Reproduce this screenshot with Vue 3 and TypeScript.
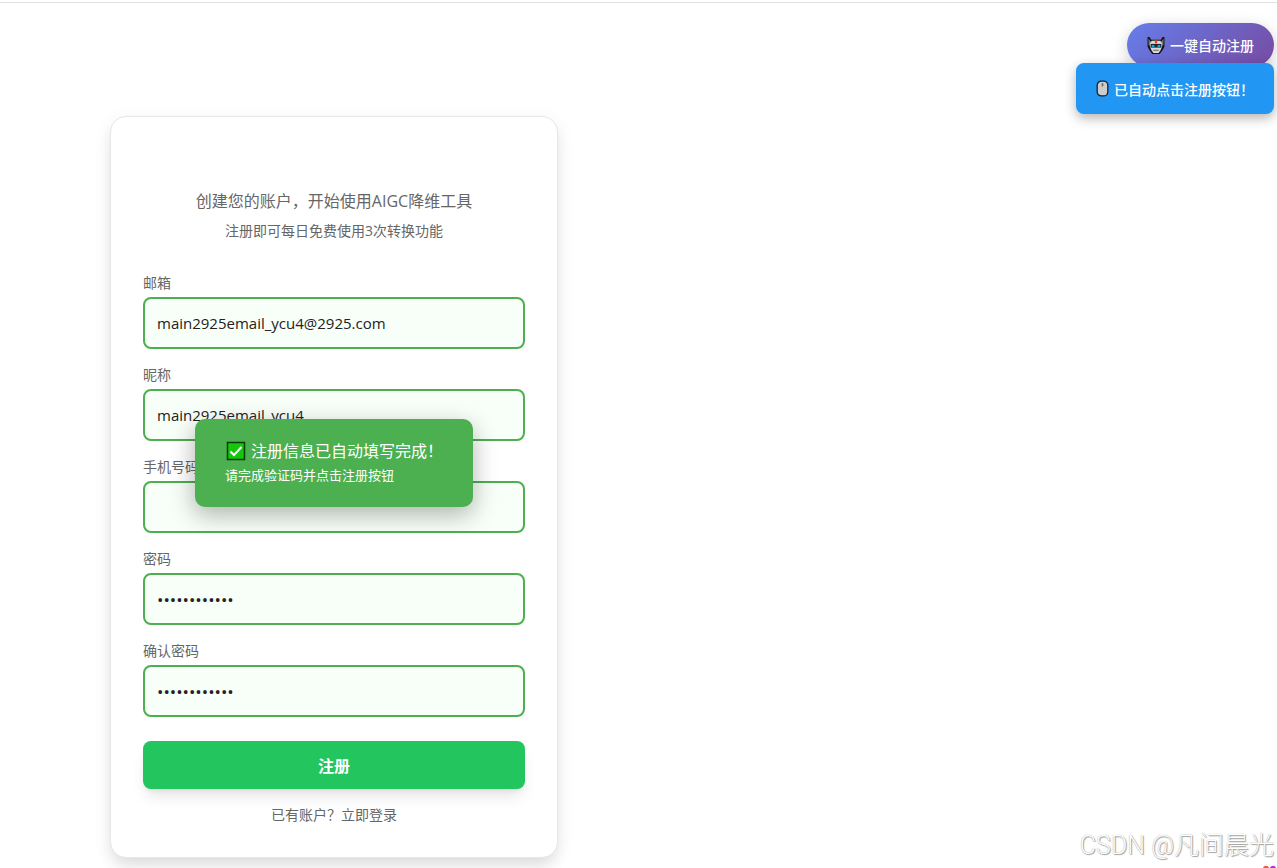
<script setup lang="ts">
import { reactive } from 'vue'

interface Field {
  id: string
  label: string
  type: string
  value: string
}

const fields = reactive<Field[]>([
  { id: 'email', label: '邮箱', type: 'email', value: 'main2925email_ycu4@2925.com' },
  { id: 'nickname', label: '昵称', type: 'text', value: 'main2925email_ycu4' },
  { id: 'phone', label: '手机号码', type: 'tel', value: '' },
  { id: 'password', label: '密码', type: 'password', value: 'abcdefgh1234' },
  { id: 'confirm', label: '确认密码', type: 'password', value: 'abcdefgh1234' },
])
</script>

<template>
  <div class="page">
    <header class="topbar"></header>
    <main class="content">
      <section class="card">
        <div class="intro">
          <p class="lead">创建您的账户，开始使用AIGC降维工具</p>
          <p class="note">注册即可每日免费使用3次转换功能</p>
        </div>
        <form @submit.prevent>
          <div v-for="f in fields" :key="f.id" class="field">
            <label :for="f.id">{{ f.label }}</label>
            <input :id="f.id" v-model="f.value" :type="f.type" autocomplete="off" />
          </div>
          <button class="submit" type="submit">注册</button>
        </form>
        <p class="login"><a href="#">已有账户？立即登录</a></p>

        <div class="done" role="status">
          <p class="done-title">
            <svg class="check" viewBox="0 0 20 20" aria-hidden="true">
              <rect x="1.500" y="1.500" width="17" height="17" fill="#16c60c" stroke="#0b3d0b" stroke-width="1.500" />
              <path d="M4.500 10.500 8 14l7.500-8" fill="none" stroke="#fff" stroke-width="2" />
            </svg>
            <span>注册信息已自动填写完成！</span>
          </p>
          <p class="done-note">请完成验证码并点击注册按钮</p>
        </div>
      </section>
    </main>

    <div class="floating">
      <button class="auto" type="button">
        <svg class="robot" viewBox="0 0 16 16" aria-hidden="true">
          <path d="M0 0h2l1.500 2.500h9L14 0h2v9l-1.500 3-3 4h-7l-3-4L0 9z" fill="#17171e" />
          <path d="M1 1.500l2 3V9L1 7.500zM15 1.500l-2 3V9l2-1.500z" fill="#77737c" />
          <path d="M4 3.500h8l1.500 2v4l-1 2.500-2 3h-5l-2-3-1-2.500v-4z" fill="#d9d9dc" />
          <path d="M7 3h2v3H7z" fill="#f03a17" />
          <path d="M3 6.500h10V10H3z" fill="#20242c" />
          <path d="M4 7.500h2.500v2H4zM9.500 7.500H12v2H9.500z" fill="#13a9d8" />
          <path d="M5.500 12h5v1h-5z" fill="#66666d" />
        </svg>
        <span>一键自动注册</span>
      </button>
      <div class="clicked" role="status">
        <svg class="mouse" viewBox="0 0 12 16" aria-hidden="true">
          <rect x="1" y="1" width="10" height="14" rx="4" fill="#ccc" stroke="#16202a" stroke-width="1.200" />
          <path d="M6 3v3" stroke="#666" stroke-width="1.500" />
        </svg>
        <span>已自动点击注册按钮！</span>
      </div>
    </div>

    <svg class="bubble" viewBox="0 0 24 12" aria-hidden="true">
      <path d="M0 12C4 4 12 0 24 0v12z" fill="#fff" />
      <path d="M10 12c1-3 5-3 6 0z" fill="#f0564a" />
      <path d="M17 12c1-3 5-3 6 0z" fill="#c12bdc" />
    </svg>
    <div class="watermark">CSDN @凡间晨光</div>
  </div>
</template>

<style>
body {
  margin: 0;
  background: #fff;
}
</style>

<style scoped>
.page {
  position: relative;
  box-sizing: border-box;
  min-height: 100vh;
  overflow: hidden;
  font-family: "Open Sans", "Noto Sans CJK SC", sans-serif;
  color: #666;
}
p {
  margin: 0;
}
.topbar {
  height: 2px;
  border-bottom: 1px solid #e0e0e0;
}
.content {
  padding: 113px 20px 10px 110px;
}
.card {
  position: relative;
  box-sizing: border-box;
  max-width: 448px;
  padding: 72px 32px 32px;
  border: 1px solid #e5e7eb;
  border-radius: 16px;
  background: #fff;
  box-shadow: 0 10px 15px -3px rgba(0, 0, 0, 0.1), 0 4px 20px rgba(0, 0, 0, 0.06);
}
.intro {
  display: flex;
  flex-direction: column;
  gap: 8px;
  margin-bottom: 32px;
  text-align: center;
}
.lead {
  font-size: 16px;
  line-height: 24px;
}
.note {
  font-size: 14px;
  line-height: 20px;
}
form {
  display: flex;
  flex-direction: column;
  gap: 16px;
}
.field {
  display: flex;
  flex-direction: column;
  gap: 4px;
}
label {
  font-size: 14px;
  line-height: 20px;
}
input {
  box-sizing: border-box;
  width: 100%;
  height: 52px;
  padding: 0 12px;
  border: 2px solid #4caf50;
  border-radius: 8px;
  outline: none;
  background: #f8fff8;
  color: #222;
  font-family: inherit;
  font-size: 15px;
}
input[type="password"] {
  font-size: 17px;
}
.submit {
  height: 48px;
  margin-top: 8px;
  padding: 0;
  border: 0;
  border-radius: 8px;
  background: #22c55e;
  color: #fff;
  font-family: inherit;
  font-size: 16px;
  font-weight: 700;
  box-shadow: 0 10px 15px -3px rgba(0, 0, 0, 0.1), 0 4px 6px -4px rgba(0, 0, 0, 0.1);
}
.login {
  margin-top: 16px;
  text-align: center;
  font-size: 14px;
  line-height: 20px;
}
.login a {
  color: inherit;
  text-decoration: none;
}
.done {
  position: absolute;
  top: 302px;
  left: 50%;
  box-sizing: border-box;
  padding: 20px 30px;
  border-radius: 10px;
  background: #4caf50;
  color: #fff;
  white-space: nowrap;
  transform: translateX(-50%);
  box-shadow: 0 8px 24px rgba(0, 0, 0, 0.3);
}
.done-title {
  display: flex;
  align-items: center;
  gap: 5px;
  font-size: 16px;
  line-height: 24px;
}
.check {
  width: 20px;
  height: 20px;
  margin-left: 1px;
}
.done-note {
  font-size: 13px;
  line-height: 24px;
}
.floating {
  position: absolute;
  top: 23px;
  right: 3px;
  display: flex;
  flex-direction: column;
  align-items: flex-end;
}
.auto,
.clicked {
  display: flex;
  align-items: center;
  gap: 5px;
  padding: 0 20px;
  color: #fff;
  font-size: 14px;
  font-weight: 500;
}
.auto {
  height: 44px;
  border: 0;
  border-radius: 25px;
  background: linear-gradient(135deg, #667eea 0%, #764ba2 100%);
  font-family: inherit;
  box-shadow: 0 4px 15px rgba(0, 0, 0, 0.2);
}
.clicked {
  height: 51px;
  margin-top: -4px;
  border-radius: 8px;
  background: #2196f3;
  box-shadow: 0 4px 12px rgba(0, 0, 0, 0.3);
}
.robot {
  width: 18px;
  height: 17px;
}
.mouse {
  width: 13px;
  height: 17px;
}
.watermark {
  position: absolute;
  right: 3px;
  bottom: 4px;
  color: #fff;
  font-family: Roboto, "Noto Sans CJK SC", sans-serif;
  font-size: 25px;
  font-weight: 300;
  line-height: 36px;
  text-shadow: 1px 1px 1px rgba(0, 0, 0, 0.35), 0 0 1px rgba(0, 0, 0, 0.4);
}
.bubble {
  position: absolute;
  right: 0;
  bottom: 0;
  width: 24px;
  height: 12px;
}
</style>
